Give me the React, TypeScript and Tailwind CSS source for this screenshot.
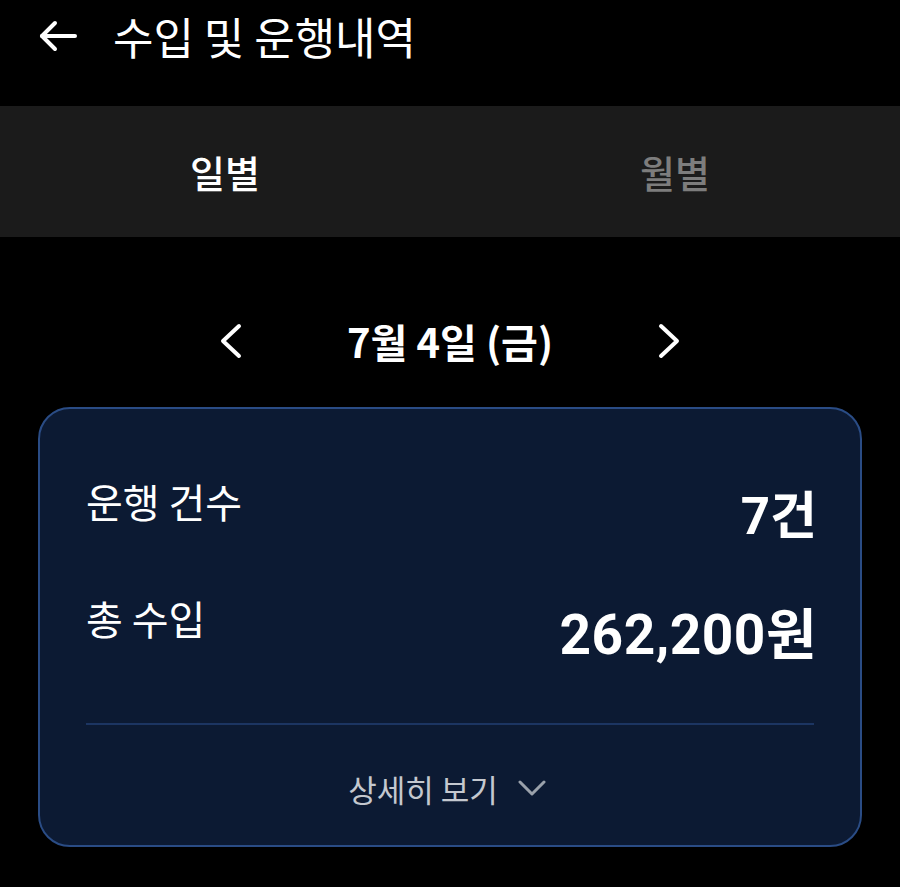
import React from "react";

const font = { fontFamily: '"Roboto", "Noto Sans CJK KR", sans-serif' };
const kr = { fontFamily: '"Noto Sans CJK KR", sans-serif' };

export default function App() {
  return (
    <div className="w-[900px] h-[887px] bg-black text-white overflow-hidden" style={font}>
      {/* Header */}
      <div className="h-[72px] flex items-center pl-[38px]">
        <svg width="40" height="32" viewBox="0 0 40 32" fill="none" stroke="white" strokeWidth="4" strokeLinecap="round" strokeLinejoin="round">
          <path d="M37 16H4" />
          <path d="M17 3L4 16L17 29" />
        </svg>
        <span className="ml-[35px] text-[44px] leading-none font-normal" style={kr}>수입 및 운행내역</span>
      </div>

      {/* Tabs */}
      <div className="mt-[34px] h-[131px] bg-[#1b1b1b] grid grid-cols-2 items-center">
        <div className="text-center text-[38px] font-medium text-white" style={kr}>일별</div>
        <div className="text-center text-[38px] font-medium text-[#7d7d7d]" style={kr}>월별</div>
      </div>

      {/* Date row */}
      <div className="h-[170px] pt-[38px] flex items-center justify-center">
        <svg width="24" height="36" viewBox="0 0 24 36" fill="none" stroke="white" strokeWidth="4" strokeLinecap="round" strokeLinejoin="round">
          <path d="M20 3L4 18L20 33" />
        </svg>
        <span className="mx-[104px] text-[40px] font-bold leading-none" style={kr}>7월 4일 (금)</span>
        <svg width="24" height="36" viewBox="0 0 24 36" fill="none" stroke="white" strokeWidth="4" strokeLinecap="round" strokeLinejoin="round">
          <path d="M4 3L20 18L4 33" />
        </svg>
      </div>

      {/* Card */}
      <div className="mx-[38px] h-[440px] rounded-[32px] border-2 border-[#2a4c85] bg-[#0c1a33] px-[46px] flex flex-col">
        <div className="mt-[72px] flex justify-between items-start">
          <span className="text-[40px] leading-none" style={kr}>운행 건수</span>
          <span className="text-[51px] font-bold leading-none mt-[10px] mr-[-3px]">7건</span>
        </div>
        <div className="mt-[56px] flex justify-between items-start">
          <span className="text-[40px] leading-none" style={kr}>총 수입</span>
          <span className="text-[55px] font-bold leading-none mt-[10px] mr-[-3px] tracking-[0.5px]">262,200원</span>
        </div>
        <div className="mt-[60px] h-[2px] bg-[#1c3562]" />
        <div className="flex-1 flex items-center justify-center gap-[20px] pt-[6px] pr-[6px]">
          <span className="text-[31px] text-[#c4c8cf] leading-none" style={kr}>상세히 보기</span>
          <svg width="28" height="18" viewBox="0 0 28 18" fill="none" stroke="#9aa1ab" strokeWidth="3" strokeLinecap="round" strokeLinejoin="round">
            <path d="M2 3L14 15L26 3" />
          </svg>
        </div>
      </div>
    </div>
  );
}
